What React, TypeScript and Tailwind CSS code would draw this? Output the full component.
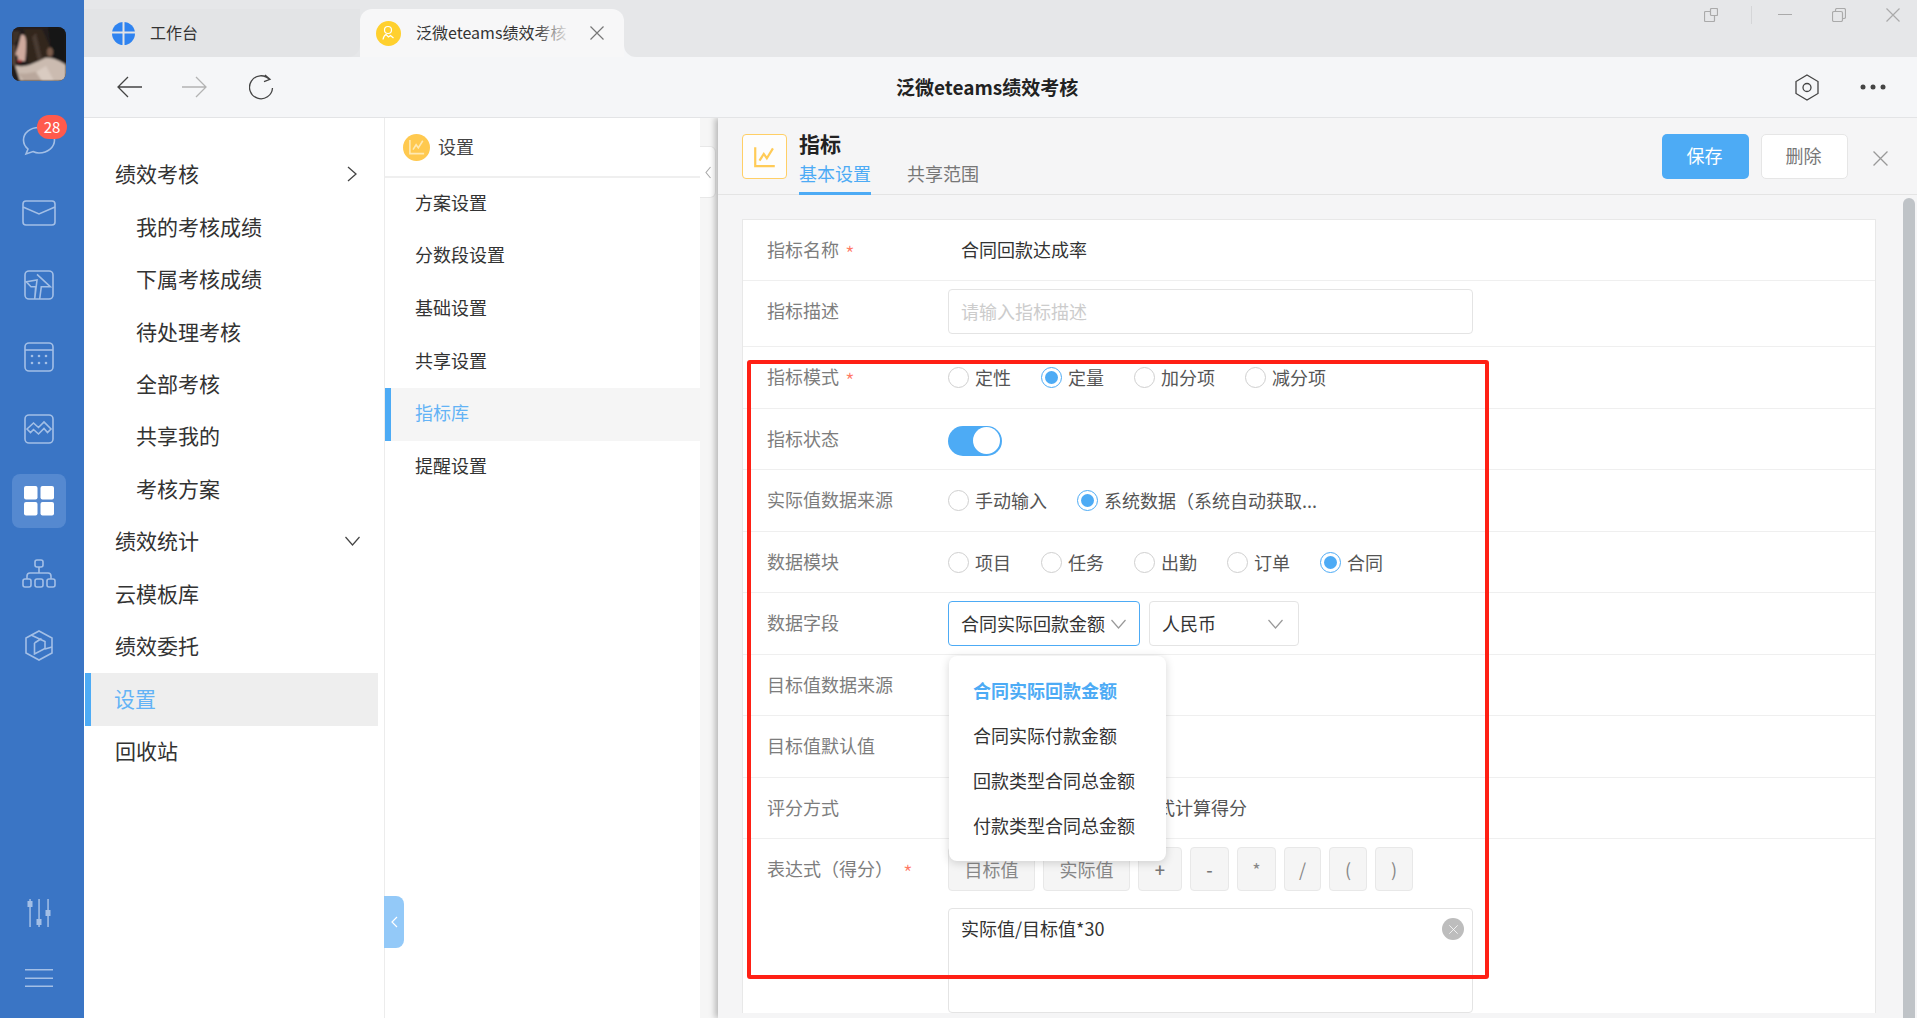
import React from "react";

const Side = ({ children, active }: { children: React.ReactNode; active?: boolean }) => (
  <div className={active ? "flex h-[54px] w-[54px] items-center justify-center rounded-[8px] bg-[#5589d0] my-[9px]" : "flex h-[72px] w-[54px] items-center justify-center"}>{children}</div>
);

const ic = "fill-none stroke-[#a3bfe6] stroke-[1.6]";

const Chat = () => (
  <svg width="34" height="30" viewBox="0 0 34 30" className={ic}>
    <path d="M17 1.5C8 1.5 1.5 7 1.5 14c0 4 2 7 4.5 9l-2 5 7-2.500c2 1 4 1.500 6 1.500 9 0 15.500-6 15.500-13S26 1.500 17 1.500Z" />
  </svg>
);
const Mail = () => (
  <svg width="34" height="26" viewBox="0 0 34 26" className={ic}>
    <rect x="1" y="1" width="32" height="24" rx="3" />
    <path d="M1 7l16 7 16-7" />
  </svg>
);
const Plane = () => (
  <svg width="30" height="30" viewBox="0 0 30 30" className={ic}>
    <rect x="1" y="1" width="28" height="28" rx="4" />
    <path d="M13 4.300 26.300 16.700H17.300L15.700 29M10.700 29 11.700 16.700H7L2.300 11.700 13 10Z" />
  </svg>
);
const Cal = () => (
  <svg width="30" height="30" viewBox="0 0 30 30" className={ic}>
    <rect x="1" y="1" width="28" height="28" rx="4" />
    <path d="M1 8h28" />
    <g className="fill-[#a3bfe6] stroke-none">
      <circle cx="8" cy="14" r="1.300" /><circle cx="15" cy="14" r="1.300" /><circle cx="22" cy="14" r="1.300" />
      <circle cx="8" cy="21" r="1.300" /><circle cx="15" cy="21" r="1.300" /><circle cx="22" cy="21" r="1.300" />
    </g>
  </svg>
);
const Mount = () => (
  <svg width="30" height="30" viewBox="0 0 30 30" className={ic}>
    <rect x="1" y="1" width="28" height="28" rx="4" />
    <path d="M3 15 9.500 9l5 4.500L20 8l7 7-3.500 3.500L20 14.500l-5.500 5.500-5-4.500L6.500 18.500Z" />
  </svg>
);
const Grid = () => (
  <svg width="30" height="30" viewBox="0 0 30 30" fill="#fff">
    <rect x="0" y="0" width="13.500" height="13.500" rx="2" />
    <rect x="16.500" y="0" width="13.500" height="13.500" rx="2" />
    <rect x="0" y="16" width="13.500" height="13.500" rx="2" />
    <rect x="16.500" y="16" width="13.500" height="13.500" rx="2" />
  </svg>
);
const Org = () => (
  <svg width="34" height="29" viewBox="0 0 34 29" className={ic}>
    <rect x="13" y="1" width="8" height="7" rx="2" />
    <rect x="1" y="20" width="8" height="8" rx="2" />
    <rect x="13" y="20" width="8" height="8" rx="2" />
    <rect x="25" y="20" width="8" height="8" rx="2" />
    <path d="M17 8v6M5 20v-3a3 3 0 0 1 3-3h18a3 3 0 0 1 3 3v3" />
  </svg>
);
const Cube = () => (
  <svg width="28" height="31" viewBox="0 0 28 31" className={ic}>
    <path d="M14 1 27 8v15l-13 7-13-7V8Z" />
    <path d="M6 5l14 6.500v7L9.500 24V13M9.500 13l7-4.500M27 17l-7 2" />
  </svg>
);
const Sliders = () => (
  <svg width="24" height="28" viewBox="0 0 24 28" fill="#a3bfe6">
    <rect x="2.300" y="0" width="1.500" height="28" />
    <rect x="11.300" y="0" width="1.500" height="28" />
    <rect x="20.300" y="0" width="1.500" height="28" />
    <rect x="0.500" y="2" width="5" height="6" />
    <rect x="9.500" y="20" width="5" height="6" />
    <rect x="18.500" y="11" width="5" height="6" />
  </svg>
);
const Burger = () => (
  <svg width="28" height="18" viewBox="0 0 28 18" fill="#a3bfe6">
    <rect x="0" y="0" width="28" height="1.500" />
    <rect x="0" y="8.500" width="28" height="1.500" />
    <rect x="0" y="16.500" width="28" height="1.500" />
  </svg>
);

const Avatar = () => (
  <svg width="54" height="54" viewBox="0 0 54 54">
    <defs>
      <filter id="b"><feGaussianBlur stdDeviation="1" /></filter>
    </defs>
    <rect width="54" height="54" fill="#241e1b" />
    <g filter="url(#b)">
      <rect x="0" y="0" width="54" height="54" fill="#241e1b" />
      <path d="M0 4h8L6 12 0 20Z" fill="#3d332c" />
      <path d="M36 0h18v40H42Z" fill="#131517" />
      <path d="M12 2 30 2 38 20 40 36H16Z" fill="#33281f" />
      <path d="M24 6l6 26-4 2-6-24Z" fill="#4a3a31" />
      <path d="M9 8c3-1 5 1 5 7s0 13-1 19H6l0-5-3-1 3-8Z" fill="#cfaa9e" />
      <path d="M0 18h3.500v20H0Z" fill="#54453b" />
      <ellipse cx="38" cy="25" rx="3" ry="4.500" fill="#7a5c4c" />
      <ellipse cx="7.500" cy="34" rx="2.300" ry="1.200" fill="#a82a32" />
      <path d="M3 38C12 42 22 36 33 31 40 30 48 34 54 38V54H8Z" fill="#cbbbb0" />
      <path d="M6 46c10 2 18-2 28-4l4 12H12Z" fill="#b9a79c" />
      <path d="M24 45l10-6 8 15H30Z" fill="#d9cbc1" />
    </g>
  </svg>
);

const Chevron = ({ c = "stroke-[#999]" }: { c?: string }) => (
  <svg width="15" height="10" viewBox="0 0 15 10" className={`fill-none stroke-[1.200] ${c}`}>
    <path d="M0.500 1 7.500 9 14.500 1" />
  </svg>
);

const X = ({ s = 14, c = "stroke-[#aaa]" }: { s?: number; c?: string }) => (
  <svg width={s} height={s} viewBox="0 0 14 14" className={`fill-none stroke-[1.200] ${c}`}>
    <path d="M0.500 0.500 13.500 13.500M13.500 0.500 0.500 13.500" />
  </svg>
);

const ChartMini = ({ c, w = 18 }: { c: string; w?: number }) => (
  <svg width={w} height={w} viewBox="0 0 18 18" className={`fill-none stroke-[1.800] ${c}`}>
    <path d="M1 1v15.500h16" />
    <path d="M4.500 12 8 6.500l2.500 3.500L15.500 2" />
  </svg>
);

const Person = () => (
  <svg width="25" height="25" viewBox="0 0 25 25">
    <circle cx="12.500" cy="12.500" r="12.500" fill="#ffd02e" />
    <g fill="none" stroke="#fff" strokeWidth="1.200">
      <circle cx="12" cy="9" r="3.500" />
      <path d="M7 18.500c.5-3 2-4.500 3-5l2.500 2.500 2-1.500 3 2.500" />
    </g>
  </svg>
);

const Nav = ({ t, sub, icon, active }: { t: string; sub?: boolean; icon?: React.ReactNode; active?: boolean }) => (
  <div
    className={
      active
        ? "ml-[1px] mr-[6px] flex h-[53px] items-center border-l-[6px] border-[#4dabf5] bg-[#eeeeee] pb-[2px] pl-[23px] text-[21px] text-[#63b3f6]"
        : sub
        ? "flex h-[52.400px] items-center pb-[2px] pl-[52px] text-[21px] text-[#333]"
        : "flex h-[52.400px] items-center justify-between pb-[2px] pl-[31px] pr-[24px] text-[21px] text-[#333]"
    }
  >
    <span>{t}</span>
    {icon}
  </div>
);

const Sub = ({ t, active }: { t: string; active?: boolean }) => (
  <div
    className={
      active
        ? "flex h-[53px] items-center border-l-[6px] border-[#4dabf5] bg-[#f5f5f5] pb-[4px] pl-[24px] text-[18px] text-[#63b3f6]"
        : "flex h-[52.600px] items-center pb-[4px] pl-[30px] text-[18px] text-[#333]"
    }
  >
    {t}
  </div>
);

const Star = () => (
  <span className="ml-[6px] mt-[7px] text-[22px] font-light leading-none text-[#ff7a66]">*</span>
);

const Label = ({ t, star }: { t: string; star?: boolean }) => (
  <div className="flex w-[181px] shrink-0 items-center pb-[2px] text-[18px] text-[#7d7d7d]">
    <span>{t}</span>
    {star && <Star />}
  </div>
);

const Radio = ({ t, on }: { t: string; on?: boolean }) => (
  <div className="mr-[30px] flex items-center text-[18px] text-[#555]">
    <span className={on ? "flex h-[21px] w-[21px] items-center justify-center rounded-full border border-[#4dabf5] bg-white" : "h-[21px] w-[21px] rounded-full border border-[#cfcfcf] bg-white"}>
      {on && <span className="h-[13px] w-[13px] rounded-full bg-[#4dabf5]" />}
    </span>
    <span className="ml-[6px] whitespace-nowrap">{t}</span>
  </div>
);

const Op = ({ t, w, strong }: { t: string; w: string; strong?: boolean }) => (
  <div className={`${w} flex h-[44px] shrink-0 items-center justify-center rounded-[4px] border border-[#e8e8e8] bg-[#f5f5f5] text-[18px] ${strong ? "font-medium text-[#777]" : "text-[#888]"}`}>{t}</div>
);

export default function App() {
  return (
    <div className="relative flex h-[1018px] w-[1917px] overflow-hidden bg-white font-['Noto_Sans_CJK_SC','Liberation_Sans',sans-serif]">
      {/* sidebar */}
      <aside className="flex w-[84px] shrink-0 flex-col items-center bg-[#3a75c5] pb-[8px] pr-[6px]">
        <div className="mt-[27px] h-[54px] w-[54px] overflow-hidden rounded-[8px]"><Avatar /></div>
        <div className="mt-[24px] flex flex-col items-center">
          <div className="relative">
            <Side><Chat /></Side>
            <span className="absolute left-[25px] top-[10px] flex h-[24px] w-[30px] items-center justify-center rounded-full bg-[#ff5a4d] text-[15px] text-white">28</span>
          </div>
          <Side><Mail /></Side>
          <Side><Plane /></Side>
          <Side><Cal /></Side>
          <Side><Mount /></Side>
          <Side active><Grid /></Side>
          <Side><Org /></Side>
          <Side><Cube /></Side>
        </div>
        <div className="mt-auto flex flex-col items-center">
          <div className="flex h-[65px] items-center"><Sliders /></div>
          <div className="flex h-[65px] items-center"><Burger /></div>
        </div>
      </aside>

      <div className="flex min-w-0 flex-1 flex-col">
        {/* tabs */}
        <div className="flex h-[57px] shrink-0 bg-[#f5f6f8]">
          <div className="w-[276px] shrink-0 bg-[#e6e7e9]">
            <div className="mt-[9px] flex h-[48px] items-center rounded-br-[12px] bg-[#e3e4e6] pl-[28px]">
              <svg width="23" height="23" viewBox="0 0 23 23">
                <circle cx="11.500" cy="11.500" r="11.500" fill="#2f83f0" />
                <path d="M11.500 0v23M0 10.500h23" stroke="#e3e4e6" strokeWidth="2" />
              </svg>
              <span className="ml-[15px] pb-[2px] text-[16px] text-[#333]">工作台</span>
            </div>
          </div>
          <div className="w-[264px] shrink-0 bg-[#e6e7e9] pt-[9px]">
            <div className="flex h-[48px] items-center rounded-t-[12px] bg-[#f7f7f8] pl-[16px]">
              <Person />
              <div className="relative ml-[15px] w-[155px] overflow-hidden whitespace-nowrap pb-[2px] text-[16px] text-[#333]">
                泛微eteams绩效考核
                <span className="absolute right-0 top-0 h-full w-[36px] bg-gradient-to-r from-transparent to-[#f7f7f8]" />
              </div>
              <span className="ml-[19px]"><X s={14} c="stroke-[#777]" /></span>
            </div>
          </div>
          <div className="flex flex-1 items-start justify-end rounded-bl-[12px] bg-[#e6e7e9] pr-[17px] pt-[8px]">
            <svg width="14" height="14" viewBox="0 0 14 14" className="fill-none stroke-[#aaa] stroke-[1.200]">
              <rect x="0.500" y="3.500" width="10" height="10" rx="1" />
              <rect x="6.500" y="0.500" width="7" height="7" rx="1" fill="#e6e7e9" />
            </svg>
            <span className="ml-[33px] mt-[-2px] h-[18px] w-px bg-[#d5d6d8]" />
            <span className="ml-[26px] mt-[6px] h-px w-[14px] bg-[#aaa]" />
            <svg width="14" height="14" viewBox="0 0 14 14" className="ml-[40px] fill-none stroke-[#aaa] stroke-[1.200]">
              <rect x="3.500" y="0.500" width="10" height="10" rx="1.500" />
              <rect x="0.500" y="3.500" width="10" height="10" rx="1.500" fill="#e6e7e9" />
            </svg>
            <span className="ml-[40px]"><X /></span>
          </div>
        </div>

        {/* toolbar */}
        <div className="flex h-[61px] shrink-0 items-center border-b border-[#e3e4e6] bg-[#f5f6f8] pl-[33px] pr-[31px]">
          <svg width="25" height="22" viewBox="0 0 25 22" className="fill-none stroke-[#444] stroke-[1.300]">
            <path d="M25 11H1M11 1 1 11l10 10" />
          </svg>
          <svg width="25" height="22" viewBox="0 0 25 22" className="ml-[40px] fill-none stroke-[#b3b3b3] stroke-[1.300]">
            <path d="M0 11h24M14 1l10 10-10 10" />
          </svg>
          <svg width="26" height="26" viewBox="0 0 26 26" className="ml-[42px] fill-none stroke-[#444] stroke-[1.300]">
            <path d="M20.500 5.500A11.500 11.500 0 1 0 23.500 14M16 1l5 4.300-6 2.300" />
          </svg>
          <span className="ml-[621px] text-[19px] font-bold text-[#222]">泛微eteams绩效考核</span>
          <div className="ml-auto flex items-center gap-[41px]">
            <svg width="24" height="27" viewBox="0 0 24 27" className="fill-none stroke-[#444] stroke-[1.300]">
              <path d="M12 1 23 7.500v12L12 26 1 19.500v-12Z" />
              <circle cx="12" cy="13.500" r="4" />
            </svg>
            <svg width="26" height="6" viewBox="0 0 26 6" fill="#444">
              <circle cx="3" cy="3" r="2.500" /><circle cx="13" cy="3" r="2.500" /><circle cx="23" cy="3" r="2.500" />
            </svg>
          </div>
        </div>

        <div className="relative flex min-h-0 flex-1 overflow-hidden">
          {/* nav 1 */}
          <nav className="w-[301px] shrink-0 border-r border-[#ececec] pt-[31px]">
            <Nav t="绩效考核" icon={<svg width="10" height="16" viewBox="0 0 10 16" className="mr-[3px] fill-none stroke-[#444] stroke-[1.300]"><path d="M1 1l8 7-8 7" /></svg>} />
            <Nav t="我的考核成绩" sub />
            <Nav t="下属考核成绩" sub />
            <Nav t="待处理考核" sub />
            <Nav t="全部考核" sub />
            <Nav t="共享我的" sub />
            <Nav t="考核方案" sub />
            <Nav t="绩效统计" icon={<Chevron c="stroke-[#444]" />} />
            <Nav t="云模板库" />
            <Nav t="绩效委托" />
            <Nav t="设置" active />
            <Nav t="回收站" />
          </nav>

          {/* nav 2 */}
          <div className="w-[315px] shrink-0">
            <div className="flex h-[60px] items-center border-b-2 border-[#efefef] pl-[18px]">
              <span className="flex h-[27px] w-[27px] items-center justify-center rounded-full bg-[#ffc94f]">
                <ChartMini c="stroke-[#ffe9b3]" w={16} />
              </span>
              <span className="ml-[8px] pb-[2px] text-[18px] text-[#444]">设置</span>
            </div>
            <Sub t="方案设置" />
            <Sub t="分数段设置" />
            <Sub t="基础设置" />
            <Sub t="共享设置" />
            <Sub t="指标库" active />
            <Sub t="提醒设置" />
          </div>

          {/* collapse handle over the nav divider */}
          <div className="absolute left-[300px] top-[778px] flex h-[52px] w-[20px] items-center justify-center rounded-r-[8px] bg-[#93c9f8]">
            <svg width="7" height="12" viewBox="0 0 7 12" className="fill-none stroke-white stroke-[1.200]"><path d="M6 1 1 6l5 5" /></svg>
          </div>

          {/* strip */}
          <div className="relative w-[18px] shrink-0 bg-[#f6f6f6]">
            <div className="absolute left-0 top-[28px] flex h-[52px] w-[16px] items-center justify-center rounded-r-[6px] border border-l-0 border-[#e8e8e8] bg-white">
              <svg width="6" height="13" viewBox="0 0 6 13" className="fill-none stroke-[#aaa] stroke-[1.100]"><path d="M5.500 1 1 6.500 5.500 12" /></svg>
            </div>
          </div>

          {/* detail panel */}
          <section className="relative flex min-w-0 flex-1 flex-col overflow-hidden bg-[#f5f5f6] shadow-[-3px_0_6px_rgba(0,0,0,0.25)]">
            <header className="flex h-[77px] shrink-0 items-start border-b border-[#e4e4e4] pl-[24px] pr-[29px]">
              <div className="mt-[16px] flex h-[45px] w-[45px] items-center justify-center rounded-[4px] border border-[#ffcf66] bg-[#fdfdfd]">
                <ChartMini c="stroke-[#ffcb57]" w={22} />
              </div>
              <div className="ml-[12px]">
                <div className="mt-[11px] h-[30px] text-[21px] font-bold leading-[28px] text-[#222]">指标</div>
                <div className="flex gap-[36px] text-[18px] leading-[28px]">
                  <span className="border-b-[3px] border-[#4dabf5] pb-[5px] text-[#4dabf5]">基本设置</span>
                  <span className="text-[#777]">共享范围</span>
                </div>
              </div>
              <div className="ml-auto mt-[16px] flex items-start">
                <div className="flex h-[45px] w-[87px] items-center justify-center rounded-[5px] bg-[#4dabf5] pb-[2px] pr-[2px] text-[18px] text-white">保存</div>
                <div className="ml-[12px] flex h-[45px] w-[87px] items-center justify-center rounded-[5px] border border-[#e6e6e6] bg-white pb-[2px] pr-[2px] text-[18px] text-[#777]">删除</div>
                <span className="ml-[25px] mt-[17px]"><X s={15} c="stroke-[#999]" /></span>
              </div>
            </header>

            <div className="min-h-0 flex-1 pl-[24px] pt-[24px]">
              <div className="w-[1134px] border border-b-0 border-[#e8e8e8] bg-white">
                <div className="flex h-[61px] items-center border-b border-[#efefef] pl-[24px]">
                  <Label t="指标名称" star />
                  <span className="pb-[2px] pl-[13px] text-[18px] text-[#333]">合同回款达成率</span>
                </div>
                <div className="flex h-[66px] items-center border-b border-[#efefef] pb-[5px] pl-[24px]">
                  <Label t="指标描述" />
                  <div className="flex h-[45px] w-[525px] items-center rounded-[4px] border border-[#e4e4e4] pl-[12px] text-[18px] text-[#cccccc]">请输入指标描述</div>
                </div>
                <div className="flex h-[62px] items-center border-b border-[#efefef] pl-[24px]">
                  <Label t="指标模式" star />
                  <Radio t="定性" /><Radio t="定量" on /><Radio t="加分项" /><Radio t="减分项" />
                </div>
                <div className="flex h-[61px] items-center border-b border-[#efefef] pl-[24px]">
                  <Label t="指标状态" />
                  <div className="mt-[3px] flex h-[30px] w-[54px] items-center justify-end rounded-full bg-[#4dabf5] pr-[2px]">
                    <span className="h-[27px] w-[27px] rounded-full bg-white" />
                  </div>
                </div>
                <div className="flex h-[62px] items-center border-b border-[#efefef] pl-[24px]">
                  <Label t="实际值数据来源" />
                  <Radio t="手动输入" /><Radio t="系统数据（系统自动获取..." on />
                </div>
                <div className="flex h-[61px] items-center border-b border-[#efefef] pl-[24px]">
                  <Label t="数据模块" />
                  <Radio t="项目" /><Radio t="任务" /><Radio t="出勤" /><Radio t="订单" /><Radio t="合同" on />
                </div>
                <div className="flex h-[62px] items-center border-b border-[#efefef] pl-[24px]">
                  <Label t="数据字段" />
                  <div className="relative">
                    <div className="flex h-[45px] w-[192px] items-center justify-between rounded-[4px] border-[1.500px] border-[#4dabf5] pl-[12px] pr-[13px] text-[18px] text-[#333]">
                      <span className="whitespace-nowrap">合同实际回款金额</span>
                      <Chevron />
                    </div>
                    <div className="absolute left-[1px] top-[55px] z-20 flex h-[205px] w-[217px] flex-col rounded-[8px] bg-white pl-[24px] pt-[12px] text-[18px] text-[#333] shadow-[0_2px_10px_rgba(0,0,0,0.16)]">
                      <div className="flex h-[45px] items-center font-bold text-[#4dabf5]">合同实际回款金额</div>
                      <div className="flex h-[45px] items-center">合同实际付款金额</div>
                      <div className="flex h-[45px] items-center">回款类型合同总金额</div>
                      <div className="flex h-[45px] items-center">付款类型合同总金额</div>
                    </div>
                  </div>
                  <div className="ml-[9px] flex h-[45px] w-[150px] items-center justify-between rounded-[4px] border border-[#e4e4e4] pl-[12px] pr-[15px] text-[18px] text-[#333]">
                    <span>人民币</span>
                    <Chevron />
                  </div>
                </div>
                <div className="flex h-[61px] items-center border-b border-[#efefef] pl-[24px]">
                  <Label t="目标值数据来源" />
                </div>
                <div className="flex h-[62px] items-center border-b border-[#efefef] pl-[24px]">
                  <Label t="目标值默认值" />
                </div>
                <div className="flex h-[61px] items-center border-b border-[#efefef] pl-[24px]">
                  <Label t="评分方式" />
                  <span className="ml-[209px] pb-[2px] text-[18px] text-[#555]">式计算得分</span>
                </div>
                <div className="flex items-start pl-[24px] pt-[8px]">
                  <div className="flex h-[44px] w-[181px] shrink-0 items-center pb-[2px] text-[18px] text-[#7d7d7d]">
                    <span>表达式（得分）</span>
                    <span className="ml-[10px] mt-[7px] text-[22px] font-light leading-none text-[#ff7a66]">*</span>
                  </div>
                  <div>
                    <div className="flex gap-[8px]">
                      <Op t="目标值" w="w-[87px]" />
                      <Op t="实际值" w="w-[87px]" />
                      <Op t="+" w="w-[44px]" strong />
                      <Op t="-" w="w-[39px]" strong />
                      <Op t="*" w="w-[39px]" />
                      <Op t="/" w="w-[37px]" />
                      <Op t="(" w="w-[38px]" />
                      <Op t=")" w="w-[38px]" />
                    </div>
                    <div className="relative mt-[17px] h-[105px] w-[525px] rounded-[4px] border border-[#e4e4e4] pl-[12px] pt-[6px] text-[18px] text-[#333]">
                      实际值/目标值*30
                      <span className="absolute right-[8px] top-[9px] flex h-[22px] w-[22px] items-center justify-center rounded-full bg-[#bdbdbd]">
                        <X s={9} c="stroke-white" />
                      </span>
                    </div>
                  </div>
                </div>
              </div>
            </div>

            <div className="absolute right-[2px] top-[80px] h-[830px] w-[12px] rounded-full bg-[#bfc3c7]" />
          </section>
        </div>
      </div>

      {/* red annotation */}
      <div className="pointer-events-none absolute left-[747px] top-[360px] z-30 h-[619px] w-[742px] rounded-[3px] border-[4px] border-[#ff2015]" />
    </div>
  );
}
